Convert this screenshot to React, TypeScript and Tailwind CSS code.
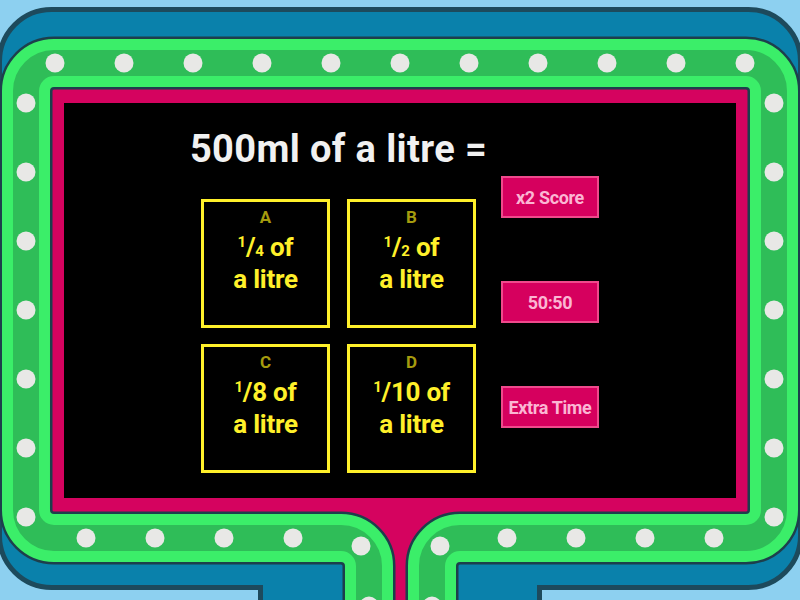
import React from 'react';

// T-shaped outline: rounded main rect plus a stem going down off the page
function tPath(x0: number, y0: number, x1: number, y1: number, r: number, sx0: number, sx1: number, f: number, bottom: number) {
  return `M${x0 + r},${y0} H${x1 - r} A${r},${r} 0 0 1 ${x1},${y0 + r} V${y1 - r} A${r},${r} 0 0 1 ${x1 - r},${y1} H${sx1 + f} A${f},${f} 0 0 0 ${sx1},${y1 + f} V${bottom} H${sx0} V${y1 + f} A${f},${f} 0 0 0 ${sx0 - f},${y1} H${x0 + r} A${r},${r} 0 0 1 ${x0},${y1 - r} V${y0 + r} A${r},${r} 0 0 1 ${x0 + r},${y0} Z`;
}

const bezel = tPath(-0.5, 9.5, 800.5, 587.5, 52, 260.5, 539.5, 0, 700);
const ring = tPath(26, 63, 774, 538, 28, 369, 432, 28, 700);

const dots: [number, number][] = [];
for (let k = 0; k <= 10; k++) dots.push([55 + 69 * k, 63]);
for (let k = 0; k <= 6; k++) {
  dots.push([26, 103 + 69 * k]);
  dots.push([774, 103 + 69 * k]);
}
[86, 155, 224, 293, 507, 576, 645, 714].forEach((x) => dots.push([x, 538]));
dots.push([361, 546], [440, 546], [369, 606], [432, 606]);

function FrameArt() {
  return (
    <svg className="absolute inset-0" width="800" height="600" viewBox="0 0 800 600">
      <path d={bezel} fill="#0a81ab" stroke="#1d4a5c" strokeWidth="5" />
      <path d={ring} fill="#d5035f" stroke="#1d3f4c" strokeWidth="53" />
      <path d={ring} fill="none" stroke="#3bee69" strokeWidth="48" />
      <path d={ring} fill="none" stroke="#2fbd58" strokeWidth="26" />
      {dots.map(([x, y], i) => (
        <circle key={i} cx={x} cy={y} r="9.5" fill="#e8e8e6" />
      ))}
    </svg>
  );
}

type Answer = { letter: string; num: string; den: string; small: boolean };

const answers: Answer[] = [
  { letter: 'A', num: '1', den: '4', small: true },
  { letter: 'B', num: '1', den: '2', small: true },
  { letter: 'C', num: '1', den: '8', small: false },
  { letter: 'D', num: '1', den: '10', small: false },
];

const powerUps = ['x2 Score', '50:50', 'Extra Time'];

export default function App() {
  return (
    <div className="relative w-[800px] h-[600px] overflow-hidden bg-[#8dd0f0] font-['Roboto','Liberation_Sans',sans-serif]">
      <FrameArt />
      <div className="relative pt-[103px] pl-[64px]">
        <div className="w-[672px] h-[395px] bg-black flex">
          <div className="ml-[128px] mt-[24px] w-[293px] flex flex-col items-center">
            <h1 className="whitespace-nowrap text-[38px] leading-[44px] font-bold text-[#f1f1f1] tracking-[0.01em]">500ml of a litre =</h1>
            <div className="mt-[28px] grid grid-cols-[129px_129px] gap-x-[17px] gap-y-[16px]">
              {answers.map((a) => (
                <div key={a.letter} className="h-[129px] border-[3px] border-[#fff02a] flex flex-col items-center pt-[5px]">
                  <span className="text-[17px] leading-[20px] font-bold text-[#a59b0e]">{a.letter}</span>
                  <div className="mt-[6px] text-center text-[26px] leading-[28px] font-bold text-[#fff02a] tracking-[-0.01em]">
                    <div>
                      <span className="relative -top-[9px] text-[15px]">{a.num}</span>/
                      {a.small ? <span className="text-[15px]">{a.den}</span> : a.den} of
                    </div>
                    <div>a litre</div>
                  </div>
                </div>
              ))}
            </div>
          </div>
          <div className="ml-[16px] mt-[73px] flex flex-col gap-[63px]">
            {powerUps.map((p) => (
              <div key={p} className="w-[98px] h-[42px] bg-[#d6005e] border-2 border-[#ef4a8c] flex items-center justify-center text-[18px] font-bold text-[#fbb6d3] whitespace-nowrap tracking-[-0.02em]">
                {p}
              </div>
            ))}
          </div>
        </div>
      </div>
    </div>
  );
}
